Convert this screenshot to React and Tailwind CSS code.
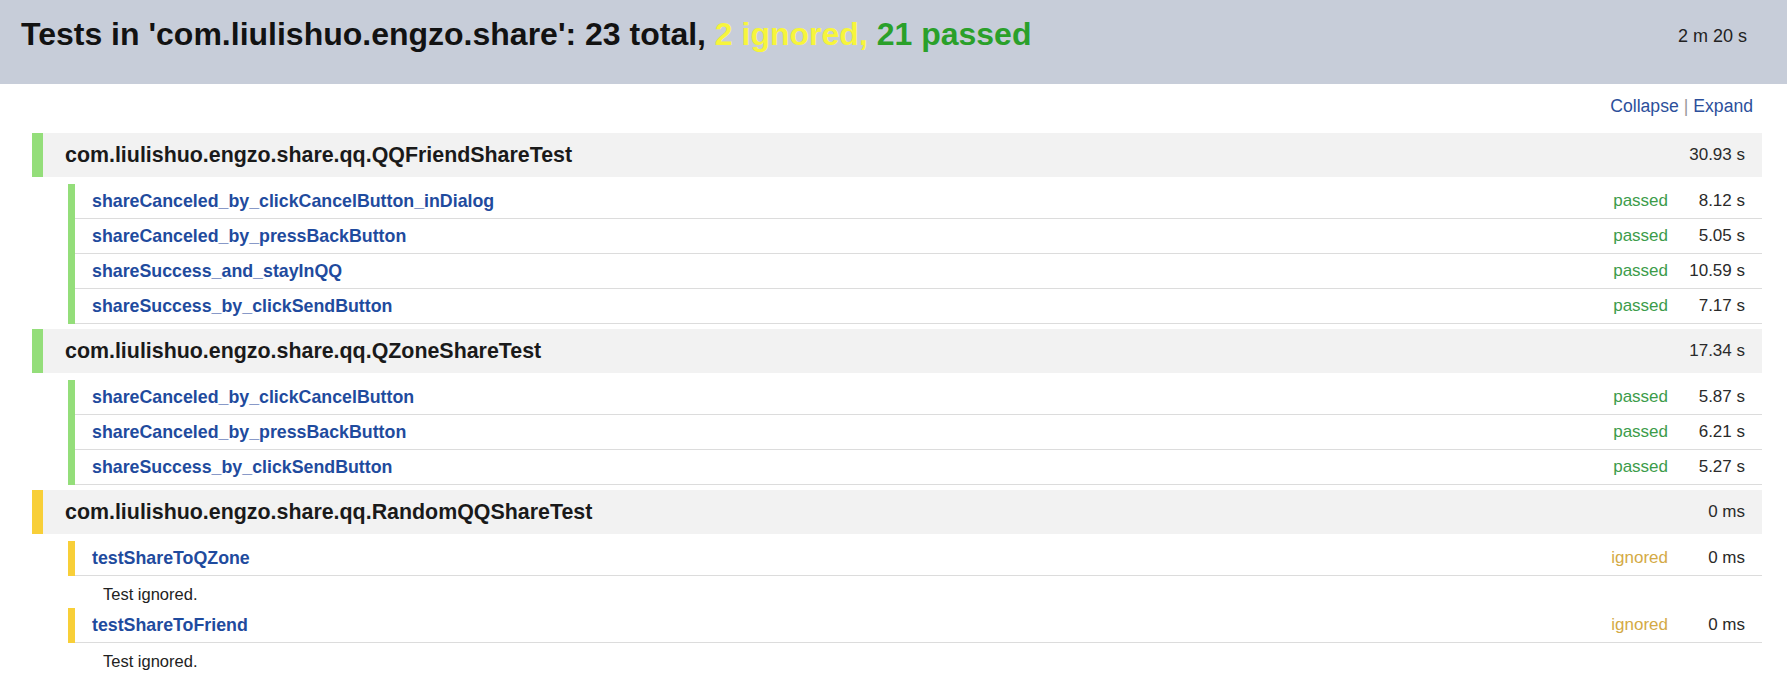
import React from "react";

const suites = [
  {
    name: "com.liulishuo.engzo.share.qq.QQFriendShareTest",
    duration: "30.93 s",
    status: "passed",
    tests: [
      { name: "shareCanceled_by_clickCancelButton_inDialog", status: "passed", duration: "8.12 s" },
      { name: "shareCanceled_by_pressBackButton", status: "passed", duration: "5.05 s" },
      { name: "shareSuccess_and_stayInQQ", status: "passed", duration: "10.59 s" },
      { name: "shareSuccess_by_clickSendButton", status: "passed", duration: "7.17 s" },
    ],
  },
  {
    name: "com.liulishuo.engzo.share.qq.QZoneShareTest",
    duration: "17.34 s",
    status: "passed",
    tests: [
      { name: "shareCanceled_by_clickCancelButton", status: "passed", duration: "5.87 s" },
      { name: "shareCanceled_by_pressBackButton", status: "passed", duration: "6.21 s" },
      { name: "shareSuccess_by_clickSendButton", status: "passed", duration: "5.27 s" },
    ],
  },
  {
    name: "com.liulishuo.engzo.share.qq.RandomQQShareTest",
    duration: "0 ms",
    status: "ignored",
    tests: [
      { name: "testShareToQZone", status: "ignored", duration: "0 ms", note: "Test ignored." },
      { name: "testShareToFriend", status: "ignored", duration: "0 ms", note: "Test ignored." },
    ],
  },
];

const TestRow = ({ test }) => {
  const passed = test.status === "passed";
  return (
    <>
      <div className="flex h-[35px]">
        <div className={passed ? "w-[7px] bg-[#94de7a]" : "w-[7px] bg-[#f8cf38]"} />
        <div className="flex flex-1 items-center border-b border-[#dcdcdc] pl-[17px] pr-[17px]">
          <a href="#" className="flex-1 text-[17.8px] font-bold text-[#1f4b9e]">
            {test.name}
          </a>
          <span className={passed ? "text-[17px] text-[#3c9c4a]" : "text-[17px] text-[#d4aa45]"}>
            {test.status}
          </span>
          <span className="w-[77px] text-right text-[17px] text-[#2a2a2a]">{test.duration}</span>
        </div>
      </div>
      {test.note && (
        <div className="h-[32px] pl-[35px] pt-[9px] text-[16.5px] leading-[19px] text-[#222]">
          {test.note}
        </div>
      )}
    </>
  );
};

const Suite = ({ suite }) => {
  const passed = suite.status === "passed";
  return (
    <div className="mb-[5px]">
      <div
        className={
          passed
            ? "flex h-[44px] items-center border-l-[11px] border-[#94de7a] bg-[#f2f2f2] pl-[22px] pr-[17px]"
            : "flex h-[44px] items-center border-l-[11px] border-[#f8cf38] bg-[#f2f2f2] pl-[22px] pr-[17px]"
        }
      >
        <span className="flex-1 text-[21.4px] font-bold text-[#1a1a1a]">{suite.name}</span>
        <span className="text-[17px] text-[#2a2a2a]">{suite.duration}</span>
      </div>
      <div className="ml-[36px] mt-[7px]">
        {suite.tests.map((t) => (
          <TestRow key={t.name} test={t} />
        ))}
      </div>
    </div>
  );
};

const App = () => {
  return (
    <div className="min-h-screen bg-white font-['Liberation_Sans',Arial,sans-serif]">
      <div className="flex h-[84px] items-start justify-between bg-[#c7cdd9] pl-[21px] pr-[40px]">
        <h1 className="pt-[16px] text-[32px] font-bold leading-[37px] text-[#121212]">
          Tests in 'com.liulishuo.engzo.share': 23 total,{" "}
          <span className="text-[#f7f53c]">2 ignored,</span>{" "}
          <span className="text-[#2aa02a]">21 passed</span>
        </h1>
        <div className="pt-[26px] text-[18px] leading-[21px] text-[#222]">2 m 20 s</div>
      </div>

      <div className="pl-[32px] pr-[25px]">
        <div className="flex justify-end pb-[17px] pr-[9px] pt-[12px] text-[17.6px] leading-[20px]">
          <a href="#" className="text-[#2c4f9b]">Collapse</a>
          <span className="px-[5px] text-[#999]">|</span>
          <a href="#" className="text-[#2c4f9b]">Expand</a>
        </div>

        {suites.map((s) => (
          <Suite key={s.name} suite={s} />
        ))}
      </div>
    </div>
  );
};

export default App;
